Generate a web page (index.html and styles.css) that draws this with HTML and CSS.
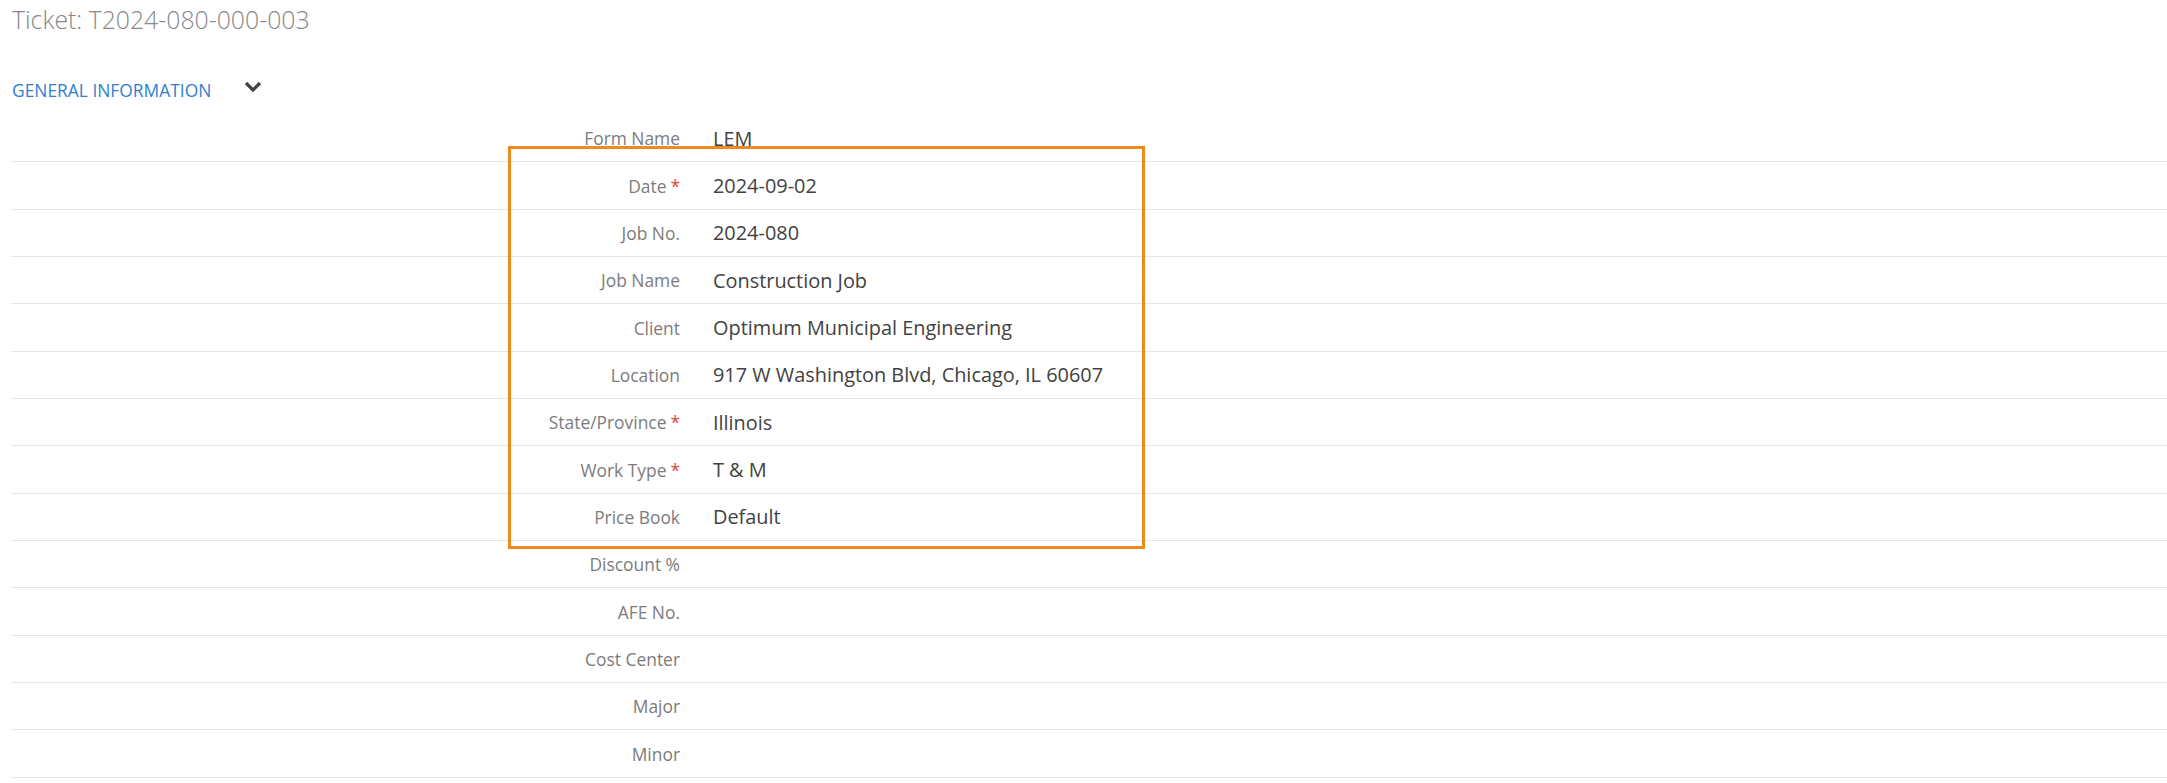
FILE: index.html
```html
<!DOCTYPE html>
<html lang="en">
<head>
<meta charset="utf-8">
<title>Ticket T2024-080-000-003</title>
<link rel="stylesheet" href="styles.css">
</head>
<body>
<div class="page">
  <h1 class="title">Ticket: T2024-080-000-003</h1>
  <div class="section-head">
    <span class="section-title">GENERAL INFORMATION</span>
    <svg class="chevron" width="18" height="11" viewBox="0 0 18 11" aria-hidden="true"><path d="M2 2 L9 9 L16 2" fill="none" stroke="#444" stroke-width="3.2" stroke-linecap="butt" stroke-linejoin="miter"/></svg>
  </div>
  <div class="form">
    <div class="row"><div class="label">Form Name</div><div class="value">LEM</div></div>
    <div class="row"><div class="label">Date<span class="req">*</span></div><div class="value">2024-09-02</div></div>
    <div class="row"><div class="label">Job No.</div><div class="value">2024-080</div></div>
    <div class="row"><div class="label">Job Name</div><div class="value">Construction Job</div></div>
    <div class="row"><div class="label">Client</div><div class="value">Optimum Municipal Engineering</div></div>
    <div class="row"><div class="label">Location</div><div class="value">917 W Washington Blvd, Chicago, IL 60607</div></div>
    <div class="row"><div class="label">State/Province<span class="req">*</span></div><div class="value">Illinois</div></div>
    <div class="row"><div class="label">Work Type<span class="req">*</span></div><div class="value">T &amp; M</div></div>
    <div class="row"><div class="label">Price Book</div><div class="value">Default</div></div>
    <div class="row"><div class="label">Discount %</div><div class="value"></div></div>
    <div class="row"><div class="label">AFE No.</div><div class="value"></div></div>
    <div class="row"><div class="label">Cost Center</div><div class="value"></div></div>
    <div class="row"><div class="label">Major</div><div class="value"></div></div>
    <div class="row"><div class="label">Minor</div><div class="value"></div></div>
    <div class="highlight"></div>
  </div>
</div>
</body>
</html>
```
FILE: styles.css
```css
html, body {
  margin: 0;
  padding: 0;
  background: #ffffff;
}
body {
  font-family: "Open Sans", "Noto Sans", sans-serif;
  overflow: hidden;
}
.page {
  padding: 0 0 0 11px;
}
.title {
  margin: 0;
  padding-top: 2px;
  font-size: 24.8px;
  font-weight: 300;
  color: #888888;
  line-height: 34px;
  padding-left: 1px;
}
.section-head {
  display: flex;
  align-items: center;
  margin-top: 38px;
  height: 32px;
  padding-left: 1px;
}
.section-title {
  font-size: 17.4px;
  color: #2f7fcf;
  line-height: 24px;
}
.chevron {
  margin-left: 33px;
  margin-top: -7px;
}
.form {
  position: relative;
  margin-top: 9px;
}
.row {
  display: grid;
  grid-template-columns: 669px 1fr;
  column-gap: 33px;
  align-items: center;
  height: 46.35px;
  border-bottom: 1px solid #e6e6e6;
}
.label {
  text-align: right;
  font-size: 17.4px;
  color: #7c7c7c;
  white-space: nowrap;
}
.req {
  color: #e0463c;
  margin-left: 4px;
  font-size: 17.4px;
}
.value {
  font-size: 19.9px;
  color: #424242;
  white-space: nowrap;
}
.highlight {
  position: absolute;
  left: 497px;
  top: 31px;
  width: 631px;
  height: 397px;
  border: 3px solid #ef8a1e;
  pointer-events: none;
}
```
